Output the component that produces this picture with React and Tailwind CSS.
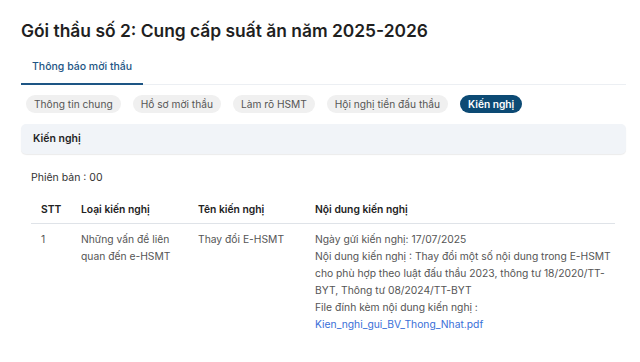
export default function App() {
  const pills = ["Thông tin chung", "Hồ sơ mời thầu", "Làm rõ HSMT", "Hội nghị tiền đấu thầu"];
  const lines = [
    "Ngày gửi kiến nghị: 17/07/2025",
    "Nội dung kiến nghị : Thay đổi một số nội dung trong E-HSMT",
    "cho phù hợp theo luật đấu thầu 2023, thông tư 18/2020/TT-",
    "BYT, Thông tư 08/2024/TT-BYT",
    "File đính kèm nội dung kiến nghị :",
  ];
  return (
    <div className="w-[640px] h-[362px] overflow-hidden bg-white text-[#222]" style={{ fontFamily: "Inter, 'Noto Sans', sans-serif" }}>
      <div className="pl-[21px] pr-[14px] pt-[19px]">
        <h1 className="text-[17.4px] leading-[24px] font-semibold text-[#1f1f1f]">Gói thầu số 2: Cung cấp suất ăn năm 2025-2026</h1>
        <div className="mt-[14px] flex border-b border-[#eceff3]">
          <div className="px-[11px] pt-[3px] pb-[9px] text-[10.5px] leading-[14px] font-medium text-[#1d5584] border-b-2 border-[#1d5584] -mb-px">Thông báo mời thầu</div>
        </div>
        <div className="mt-[10px] flex gap-[12px] pl-[5px]">
          {pills.map((p) => (
            <span key={p} className="h-[18px] px-[8px] rounded-full bg-[#f0f0f0] text-[#555] text-[10.2px] leading-[18px]">{p}</span>
          ))}
          <span className="h-[18px] px-[8px] rounded-full bg-[#0c4a74] text-white font-semibold text-[10.2px] leading-[18px]">Kiến nghị</span>
        </div>
        <div className="mt-[11px] h-[30px] rounded-[5px] bg-[#f1f4f8] shadow-[0_1px_1px_rgba(0,0,0,0.08)] flex items-center px-[12px] text-[10.5px] font-semibold text-[#1f1f1f]">Kiến nghị</div>
        <div className="pl-[10px] pr-[11px]">
          <div className="mt-[17px] text-[10.5px] leading-[14px] text-[#333]">Phiên bản : 00</div>
          <table className="mt-[13px] w-full text-[10.3px] border-collapse table-fixed">
            <colgroup>
              <col className="w-[40px]" />
              <col className="w-[117px]" />
              <col className="w-[117px]" />
              <col />
            </colgroup>
            <thead>
              <tr className="border-b border-[#dfe3e8] text-left">
                <th className="px-[10px] pt-[4px] pb-[7px] font-semibold text-[#222] leading-[14px]">STT</th>
                <th className="px-[10px] pt-[4px] pb-[7px] font-semibold text-[#222] leading-[14px]">Loại kiến nghị</th>
                <th className="px-[10px] pt-[4px] pb-[7px] font-semibold text-[#222] leading-[14px]">Tên kiến nghị</th>
                <th className="px-[10px] pt-[4px] pb-[7px] font-semibold text-[#222] leading-[14px]">Nội dung kiến nghị</th>
              </tr>
            </thead>
            <tbody className="text-[#555] leading-[17px] align-top">
              <tr>
                <td className="px-[10px] pt-[7px]">1</td>
                <td className="px-[10px] pt-[7px]">Những vấn đề liên quan đến e-HSMT</td>
                <td className="px-[10px] pt-[7px]">Thay đổi E-HSMT</td>
                <td className="pl-[10px] pr-0 pt-[7px] whitespace-nowrap">
                  {lines.map((l) => (
                    <div key={l}>{l}</div>
                  ))}
                  <a className="text-[#3a6fd8]">Kien_nghi_gui_BV_Thong_Nhat.pdf</a>
                </td>
              </tr>
            </tbody>
          </table>
        </div>
      </div>
    </div>
  );
}
